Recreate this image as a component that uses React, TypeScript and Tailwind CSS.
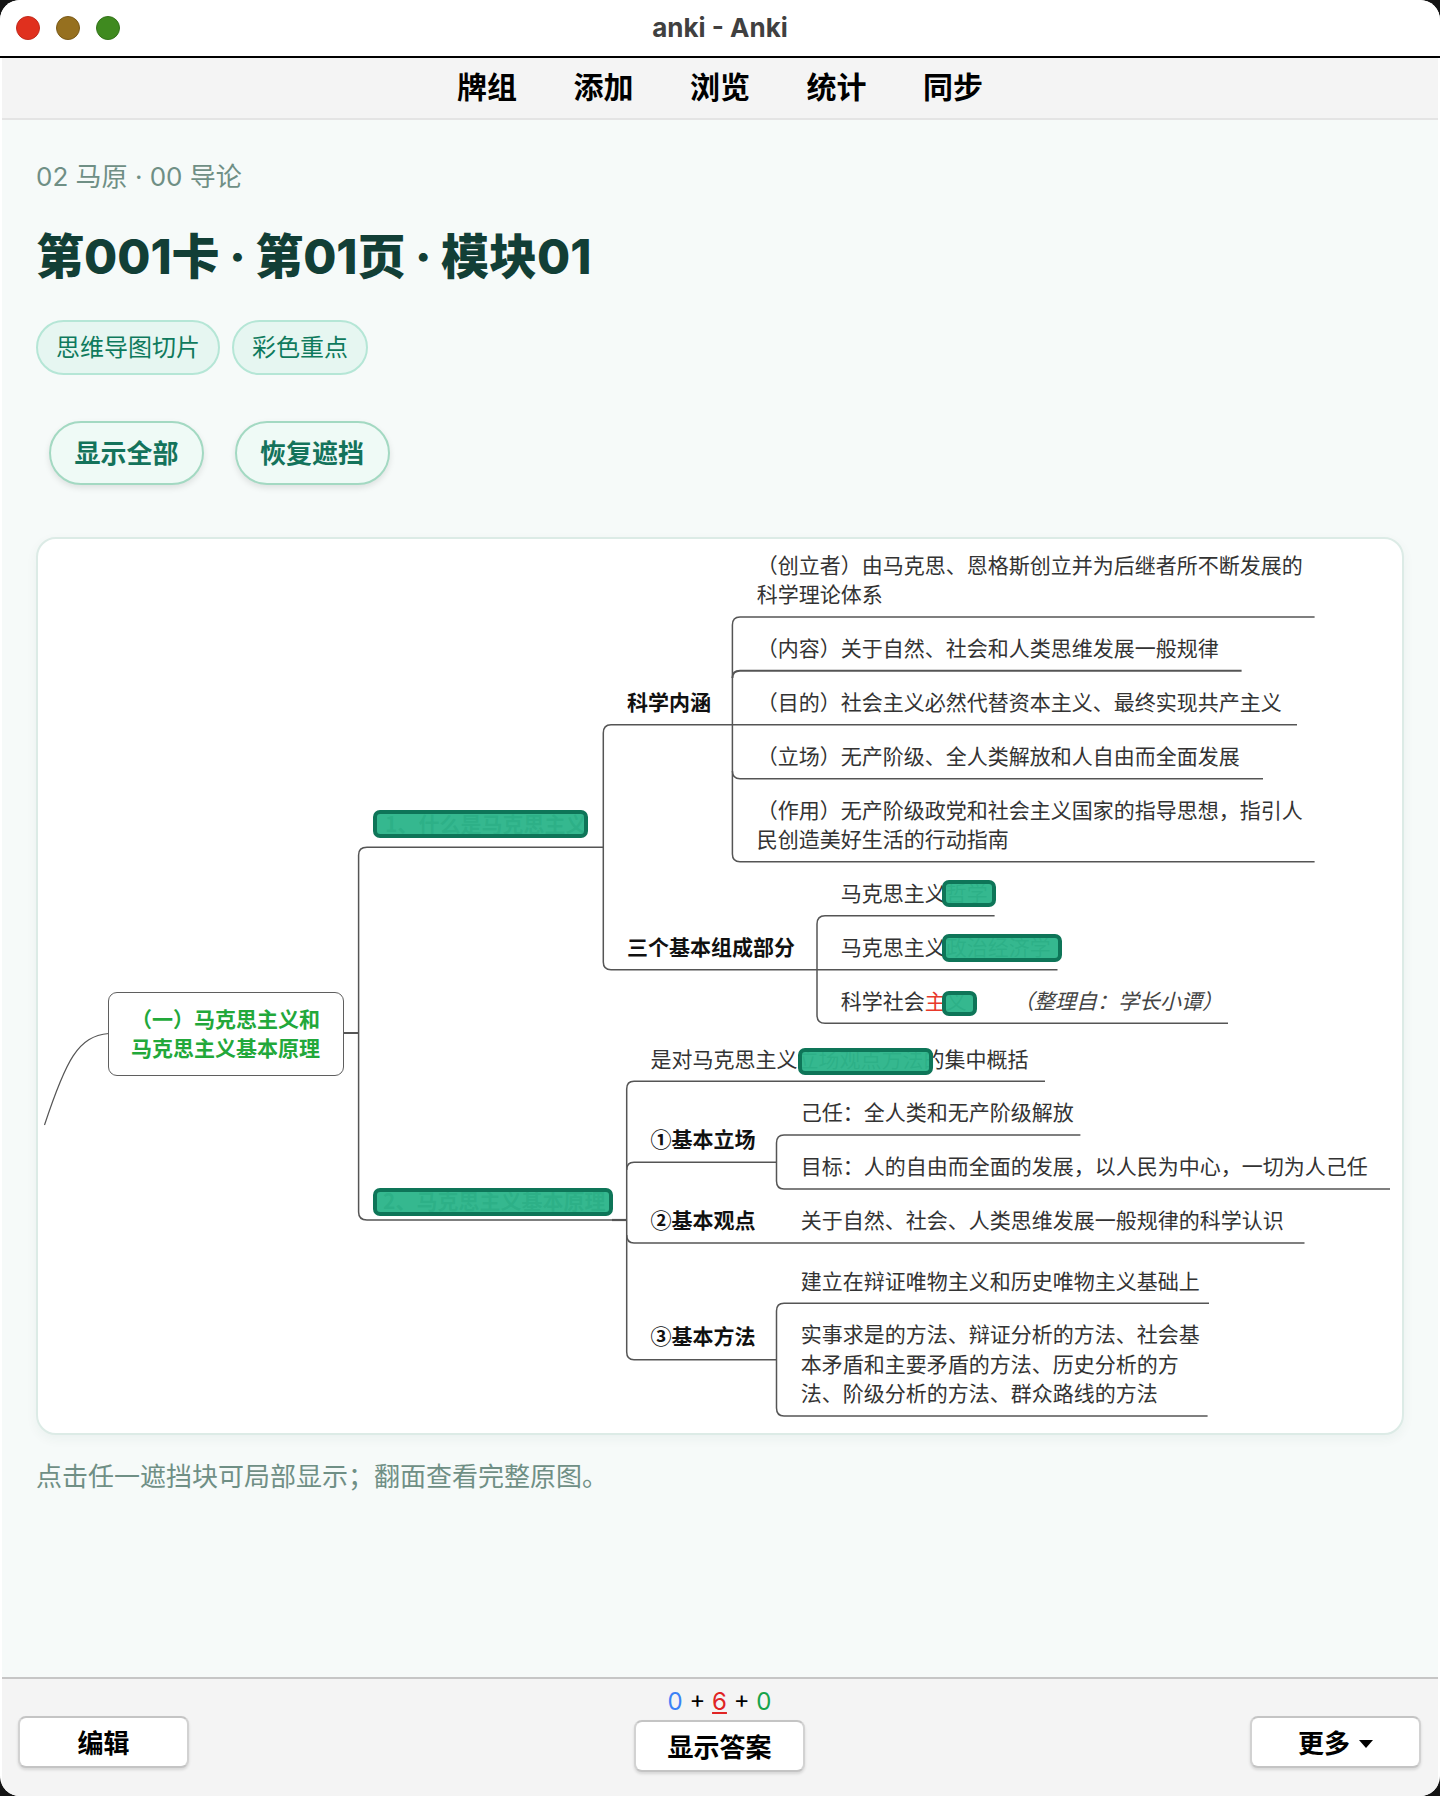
const base = "font-['Inter','Noto_Sans_CJK_SC',sans-serif]";

function T({ className, tone = "text-[#333333]", children }: { className: string; tone?: string; children: React.ReactNode }) {
  return <div className={`absolute -mt-[1.5px] whitespace-nowrap font-['Noto_Sans_CJK_SC',sans-serif] text-[21px] leading-[29px] ${tone} ${className}`}>{children}</div>;
}

function Mask({ className }: { className: string }) {
  return <div className={`absolute rounded-[7px] border-[4px] border-[#0e7558] bg-[#2db58a]/[0.96] ${className}`} />;
}

function MindMap() {
  const line = "#555555";
  const strong = "text-[#111111]";
  return (
    <div className="relative ml-[1px] h-[893px] w-[1362px]">
      <svg className="absolute left-0 top-0" width="1362" height="893" viewBox="39 539 1362 893" fill="none" stroke={line} strokeWidth="1.5">
        <path d="M108.8 1033.5 C 78 1036 66 1060 44.5 1125" strokeWidth="1.2" />
        <path d="M344 1033 H358.6" strokeWidth="2" />
        <path d="M603.3 847.3 H367 Q358.6 847.3 358.6 855 V1212 Q358.6 1220 367 1220 H626.7" />
        <path d="M612 1220 H627" strokeWidth="2.2" />
        <path d="M1297 724.7 H611 Q603.3 724.7 603.3 733 V962 Q603.3 969.7 611 969.7 H1057.5" />
        <path d="M1314.6 617 H740 Q732.4 617 732.4 625 V854 Q732.4 861.7 740 861.7 H1314.6" />
        <path d="M1241.6 670.7 H740 Q732.4 670.7 732.4 678" strokeWidth="2" />
        <path d="M1263 778.7 H740 Q732.4 778.7 732.4 771" />
        <path d="M994.6 915.7 H825 Q817 915.7 817 924 V1015 Q817 1023.3 825 1023.3 H1228" />
        <path d="M1045 1081.3 H634 Q626.7 1081.3 626.7 1089 V1352 Q626.7 1359.7 634 1359.7 H776.5" />
        <path d="M776.5 1162.3 H634 Q626.7 1162.3 626.7 1170" />
        <path d="M1304.5 1243 H634 Q626.7 1243 626.7 1235" />
        <path d="M1080.4 1135 H784 Q776.5 1135 776.5 1143 V1181 Q776.5 1189 784 1189 H1390" />
        <path d="M1209 1303.3 H784 Q776.5 1303.3 776.5 1311 V1408 Q776.5 1416 784 1416 H1207.6" />
      </svg>

      <div className="absolute left-[69px] top-[453px] h-[84px] w-[236px] rounded-[9px] border-[1.5px] border-[#5f5f5f] bg-white" />
      <T tone="text-[#22a83a]" className="left-[92px] top-[466.5px] font-bold">（一）马克思主义和</T>
      <T tone="text-[#22a83a]" className="left-[92px] top-[495.5px] font-bold">马克思主义基本原理</T>

      <T className="left-[346px] top-[271.5px] font-bold">1、什么是马克思主义</T>
      <T className="left-[344px] top-[648.5px] font-bold">2、马克思主义基本原理</T>

      <T tone={strong} className="left-[588px] top-[149.5px] font-bold">科学内涵</T>
      <T tone={strong} className="left-[588px] top-[394.2px] font-bold">三个基本组成部分</T>

      <T className="left-[717.7px] top-[12.5px]">（创立者）由马克思、恩格斯创立并为后继者所不断发展的</T>
      <T className="left-[717.7px] top-[41.5px]">科学理论体系</T>
      <T className="left-[717.7px] top-[95.5px]">（内容）关于自然、社会和人类思维发展一般规律</T>
      <T className="left-[717.7px] top-[149.5px]">（目的）社会主义必然代替资本主义、最终实现共产主义</T>
      <T className="left-[717.7px] top-[203.5px]">（立场）无产阶级、全人类解放和人自由而全面发展</T>
      <T className="left-[717.7px] top-[257.2px]">（作用）无产阶级政党和社会主义国家的指导思想，指引人</T>
      <T className="left-[717.7px] top-[286.5px]">民创造美好生活的行动指南</T>

      <T className="left-[801.7px] top-[340px]">马克思主义哲学</T>
      <T className="left-[801.7px] top-[394.2px]">马克思主义政治经济学</T>
      <T className="left-[801.7px] top-[448.2px]">科学社会<span className="text-[#e8392b]">主</span>义</T>
      <T tone="text-[#444444]" className="left-[974px] top-[448.2px] italic">（整理自：学长小谭）</T>

      <T className="left-[611.6px] top-[506.3px]">是对马克思主义立场观点方法的集中概括</T>
      <T tone={strong} className="left-[611.6px] top-[586.5px] font-bold">①基本立场</T>
      <T tone={strong} className="left-[611.6px] top-[667.2px] font-bold">②基本观点</T>
      <T tone={strong} className="left-[611.6px] top-[783.5px] font-bold">③基本方法</T>

      <T className="left-[761.8px] top-[559.5px]">己任：全人类和无产阶级解放</T>
      <T className="left-[761.8px] top-[613.5px]">目标：人的自由而全面的发展，以人民为中心，一切为人己任</T>
      <T className="left-[761.8px] top-[667.5px]">关于自然、社会、人类思维发展一般规律的科学认识</T>
      <T className="left-[761.8px] top-[728.2px]">建立在辩证唯物主义和历史唯物主义基础上</T>
      <T className="left-[761.8px] top-[781.5px]">实事求是的方法、辩证分析的方法、社会基</T>
      <T className="left-[761.8px] top-[811.2px]">本矛盾和主要矛盾的方法、历史分析的方</T>
      <T className="left-[761.8px] top-[840.5px]">法、阶级分析的方法、群众路线的方法</T>

      <Mask className="left-[334px] top-[271px] h-[28px] w-[215px]" />
      <Mask className="left-[334px] top-[649px] h-[28px] w-[240px]" />
      <Mask className="left-[903px] top-[341px] h-[27px] w-[54px]" />
      <Mask className="left-[903px] top-[395px] h-[28px] w-[120px]" />
      <Mask className="left-[903px] top-[452px] h-[25px] w-[35px]" />
      <Mask className="left-[759px] top-[509px] h-[27px] w-[135px]" />
    </div>
  );
}

function BarButton({ children, className = "" }: { children: React.ReactNode; className?: string }) {
  return (
    <button className={`flex h-[52px] w-[171px] items-center justify-center rounded-[8px] border-2 border-[#d2d2d2] border-b-[#c4c4c4] border-t-[#c4c4c4] bg-white pt-[3px] text-[26px] font-semibold text-black shadow-[0_2px_3px_rgba(0,0,0,0.12)] ${className}`}>
      {children}
    </button>
  );
}

export default function App() {
  return (
    <div lang="zh-CN" className={`h-[1796px] w-[1440px] bg-[#141414] ${base}`}>
      <div className="flex h-full w-full flex-col overflow-hidden rounded-[20px] bg-white">
        <header className="relative flex h-[58px] shrink-0 items-center justify-center border-b-[2px] border-black bg-white">
          <div className="absolute left-[16px] top-[16px] flex gap-[16px]">
            <span className="h-[24px] w-[24px] rounded-full border border-[#c22a1c] bg-[#e0301e]" />
            <span className="h-[24px] w-[24px] rounded-full border border-[#7a5a18] bg-[#96701f]" />
            <span className="h-[24px] w-[24px] rounded-full border border-[#33731a] bg-[#3f8a1f]" />
          </div>
          <span className="text-[26px] font-bold leading-none text-[#404040]">anki - Anki</span>
        </header>
        <div className="mx-[2px] flex flex-1 flex-col">
          <nav className="flex h-[62px] shrink-0 items-center justify-center gap-[56.5px] border-b-[2px] border-[#e4e4e4] bg-[#f4f4f4] pb-[2px] text-[30px] font-bold text-black">
            <span>牌组</span>
            <span>添加</span>
            <span>浏览</span>
            <span>统计</span>
            <span>同步</span>
          </nav>
          <main className="flex-1 bg-[#f6faf9] px-[34px]">
            <div className="mt-[38px] text-[26px] leading-[38px] text-[#6f8f85]">02 马原 · 00 导论</div>
            <h1 className="mt-[31px] text-[48px] font-extrabold leading-[60px] [word-spacing:-1.2px] text-[#123f36]">第001卡 · 第01页 · 模块01</h1>
            <div className="mt-[33px] flex gap-[12px]">
              <span className="flex h-[55px] w-[184px] items-center justify-center rounded-full border-2 border-[#b5e6d6] bg-[#e6f6f1] text-[24px] text-[#0f7a5d]">思维导图切片</span>
              <span className="flex h-[55px] w-[136px] items-center justify-center rounded-full border-2 border-[#b5e6d6] bg-[#e6f6f1] text-[24px] text-[#0f7a5d]">彩色重点</span>
            </div>
            <div className="ml-[13px] mt-[46px] flex gap-[30.5px]">
              <button className="flex h-[64px] w-[155px] items-center justify-center rounded-full border-2 border-[#a3d9c2] bg-[#effaf6] text-[26px] font-semibold text-[#14735b] shadow-[0_3px_6px_rgba(0,0,0,0.1)]">显示全部</button>
              <button className="flex h-[64px] w-[155px] items-center justify-center rounded-full border-2 border-[#a3d9c2] bg-[#effaf6] text-[26px] font-semibold text-[#14735b] shadow-[0_3px_6px_rgba(0,0,0,0.1)]">恢复遮挡</button>
            </div>
            <section className="mt-[52px] h-[898px] w-[1368px] rounded-[20px] border-2 border-[#dcebe6] bg-white shadow-[0_4px_12px_rgba(20,80,60,0.05)]">
              <MindMap />
            </section>
            <p className="mt-[23px] text-[26px] leading-[38px] text-[#6f8f85]">点击任一遮挡块可局部显示；翻面查看完整原图。</p>
          </main>
          <footer className="flex h-[119px] shrink-0 items-start justify-between border-t-[2px] border-[#c6c6c6] bg-[#f4f4f4] pl-[16px] pr-[17px]">
            <BarButton className="mt-[37px]">编辑</BarButton>
            <div className="flex flex-col items-center">
              <div className="mt-[5px] h-[36px] text-[24px] leading-[36px] text-black">
                <span className="text-[#3b82f6]">0</span> + <span className="text-[#e02424] underline">6</span> + <span className="text-[#16a34a]">0</span>
              </div>
              <BarButton>显示答案</BarButton>
            </div>
            <BarButton className="mt-[37px] gap-[9px]">
              更多
              <svg width="14" height="8" viewBox="0 0 14 8"><polygon points="0,0 14,0 7,8" fill="#000000" /></svg>
            </BarButton>
          </footer>
        </div>
      </div>
    </div>
  );
}
